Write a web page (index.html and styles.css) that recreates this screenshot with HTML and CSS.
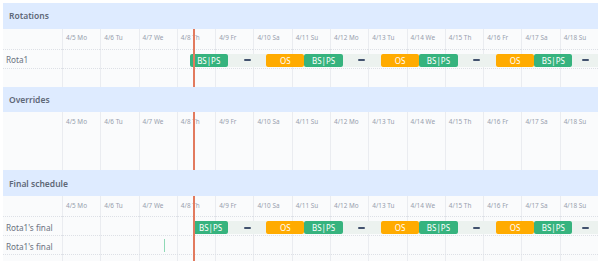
FILE: index.html
```html
<!DOCTYPE html>
<html lang="en">
<head>
  <meta charset="UTF-8">
  <meta name="viewport" content="width=device-width, initial-scale=1.0">
  <title>Schedule</title>
  <link rel="stylesheet" href="styles.css">
</head>
<body>
  <div class="page">
    <section class="block">
      <h2 class="block-title">Rotations</h2>
      <div class="board">
        <div class="corner"></div>
        <div class="day">4/5 Mo</div>
        <div class="day">4/6 Tu</div>
        <div class="day">4/7 We</div>
        <div class="day">4/8 Th</div>
        <div class="day">4/9 Fr</div>
        <div class="day">4/10 Sa</div>
        <div class="day">4/11 Su</div>
        <div class="day">4/12 Mo</div>
        <div class="day">4/13 Tu</div>
        <div class="day">4/14 We</div>
        <div class="day">4/15 Th</div>
        <div class="day">4/16 Fr</div>
        <div class="day">4/17 Sa</div>
        <div class="day">4/18 Su</div>

        <div class="label">Rota1</div>
        <div class="track">
          <div class="seg green" style="left: 23.8095%; width: 7.1429%;">BS|PS</div>
          <div class="seg gap" style="left: 30.9524%; width: 7.1429%;"><span class="dash"></span></div>
          <div class="seg orange" style="left: 38.0952%; width: 7.1429%;">OS</div>
          <div class="seg green" style="left: 45.2381%; width: 7.1429%;">BS|PS</div>
          <div class="seg gap" style="left: 52.3810%; width: 7.1429%;"><span class="dash"></span></div>
          <div class="seg orange" style="left: 59.5238%; width: 7.1429%;">OS</div>
          <div class="seg green" style="left: 66.6667%; width: 7.1429%;">BS|PS</div>
          <div class="seg gap" style="left: 73.8095%; width: 7.1429%;"><span class="dash"></span></div>
          <div class="seg orange" style="left: 80.9524%; width: 7.1429%;">OS</div>
          <div class="seg green" style="left: 88.0952%; width: 7.1429%;">BS|PS</div>
          <div class="seg gap" style="left: 95.2381%; width: 4.7619%;"><span class="dash"></span></div>
        </div>

        <div class="now" style="left: 190px;"></div>
      </div>
    </section>

    <section class="block">
      <h2 class="block-title">Overrides</h2>
      <div class="board empty">
        <div class="corner"></div>
        <div class="day">4/5 Mo</div>
        <div class="day">4/6 Tu</div>
        <div class="day">4/7 We</div>
        <div class="day">4/8 Th</div>
        <div class="day">4/9 Fr</div>
        <div class="day">4/10 Sa</div>
        <div class="day">4/11 Su</div>
        <div class="day">4/12 Mo</div>
        <div class="day">4/13 Tu</div>
        <div class="day">4/14 We</div>
        <div class="day">4/15 Th</div>
        <div class="day">4/16 Fr</div>
        <div class="day">4/17 Sa</div>
        <div class="day">4/18 Su</div>

        <div class="now" style="left: 190px;"></div>
      </div>
    </section>

    <section class="block">
      <h2 class="block-title">Final schedule</h2>
      <div class="board">
        <div class="corner"></div>
        <div class="day">4/5 Mo</div>
        <div class="day">4/6 Tu</div>
        <div class="day">4/7 We</div>
        <div class="day">4/8 Th</div>
        <div class="day">4/9 Fr</div>
        <div class="day">4/10 Sa</div>
        <div class="day">4/11 Su</div>
        <div class="day">4/12 Mo</div>
        <div class="day">4/13 Tu</div>
        <div class="day">4/14 We</div>
        <div class="day">4/15 Th</div>
        <div class="day">4/16 Fr</div>
        <div class="day">4/17 Sa</div>
        <div class="day">4/18 Su</div>

        <div class="label">Rota1's final</div>
        <div class="track">
          <div class="seg green" style="left: 24.5%; width: 6.4524%;">BS|PS</div>
          <div class="seg gap" style="left: 30.9524%; width: 7.1429%;"><span class="dash"></span></div>
          <div class="seg orange" style="left: 38.0952%; width: 7.1429%;">OS</div>
          <div class="seg green" style="left: 45.2381%; width: 7.1429%;">BS|PS</div>
          <div class="seg gap" style="left: 52.3810%; width: 7.1429%;"><span class="dash"></span></div>
          <div class="seg orange" style="left: 59.5238%; width: 7.1429%;">OS</div>
          <div class="seg green" style="left: 66.6667%; width: 7.1429%;">BS|PS</div>
          <div class="seg gap" style="left: 73.8095%; width: 7.1429%;"><span class="dash"></span></div>
          <div class="seg orange" style="left: 80.9524%; width: 7.1429%;">OS</div>
          <div class="seg green" style="left: 88.0952%; width: 7.1429%;">BS|PS</div>
          <div class="seg gap" style="left: 95.2381%; width: 4.7619%;"><span class="dash"></span></div>
        </div>

        <div class="label">Rota1's final</div>
        <div class="track">
          <div class="tick" style="left: 19.09%;"></div>
        </div>

        <div class="now" style="left: 190px;"></div>
      </div>
    </section>
  </div>
</body>
</html>
```

FILE: styles.css
```css
body {
  margin: 0;
  background-color: #fff;
  font-family: "Noto Sans", "Open Sans", sans-serif;
}
.page {
  padding: 3px 7px 0 3px;
}
.block-title {
  margin: 0;
  height: 25.7px;
  padding-left: 6px;
  display: flex;
  align-items: center;
  background-color: #deebff;
  font-size: 8.5px;
  font-weight: 600;
  color: #5e6878;
}
.board {
  position: relative;
  display: grid;
  grid-template-columns: 59px repeat(14, 1fr);
  grid-template-rows: 21px;
  grid-auto-rows: 19px;
  align-content: start;
  min-height: 58px;
  padding-bottom: 6px;
  box-sizing: border-box;
  background:
    repeating-linear-gradient(to right, #eaecf0 0 1px, transparent 1px 7.142857%) right 0 / calc(100% - 59px) 100% no-repeat,
    #fafbfc;
}
.corner,
.day,
.label,
.track {
  box-sizing: border-box;
  border-bottom: 1px dotted #dde0e6;
}
.board.empty .corner,
.board.empty .day {
  border-bottom: none;
}
.day {
  padding: 4.5px 0 0 4px;
  font-size: 6.4px;
  line-height: 10px;
  color: #979ead;
  white-space: nowrap;
  overflow: hidden;
}
.label {
  display: flex;
  align-items: center;
  padding: 2px 0 0 3px;
  font-size: 8.2px;
  color: #6b7280;
  white-space: nowrap;
}
.track {
  grid-column: span 14;
  position: relative;
  overflow: hidden;
}
.seg {
  position: absolute;
  top: 4px;
  height: 13px;
  border-radius: 2px;
  display: flex;
  align-items: center;
  justify-content: center;
  font-size: 8px;
  color: #fff;
  white-space: nowrap;
}
.seg.green {
  background-color: #36b37e;
}
.seg.orange {
  background-color: #ffab00;
}
.seg.gap {
  background-color: #ecf2ef;
  border-radius: 0;
}
.dash {
  width: 7px;
  height: 2px;
  border-radius: 1px;
  background-color: #42526e;
}
.tick {
  position: absolute;
  top: 3px;
  width: 1px;
  height: 13px;
  background-color: #8fd9b6;
}
.now {
  position: absolute;
  top: 0;
  bottom: 0;
  width: 2px;
  background-color: #e27a5e;
}
```
